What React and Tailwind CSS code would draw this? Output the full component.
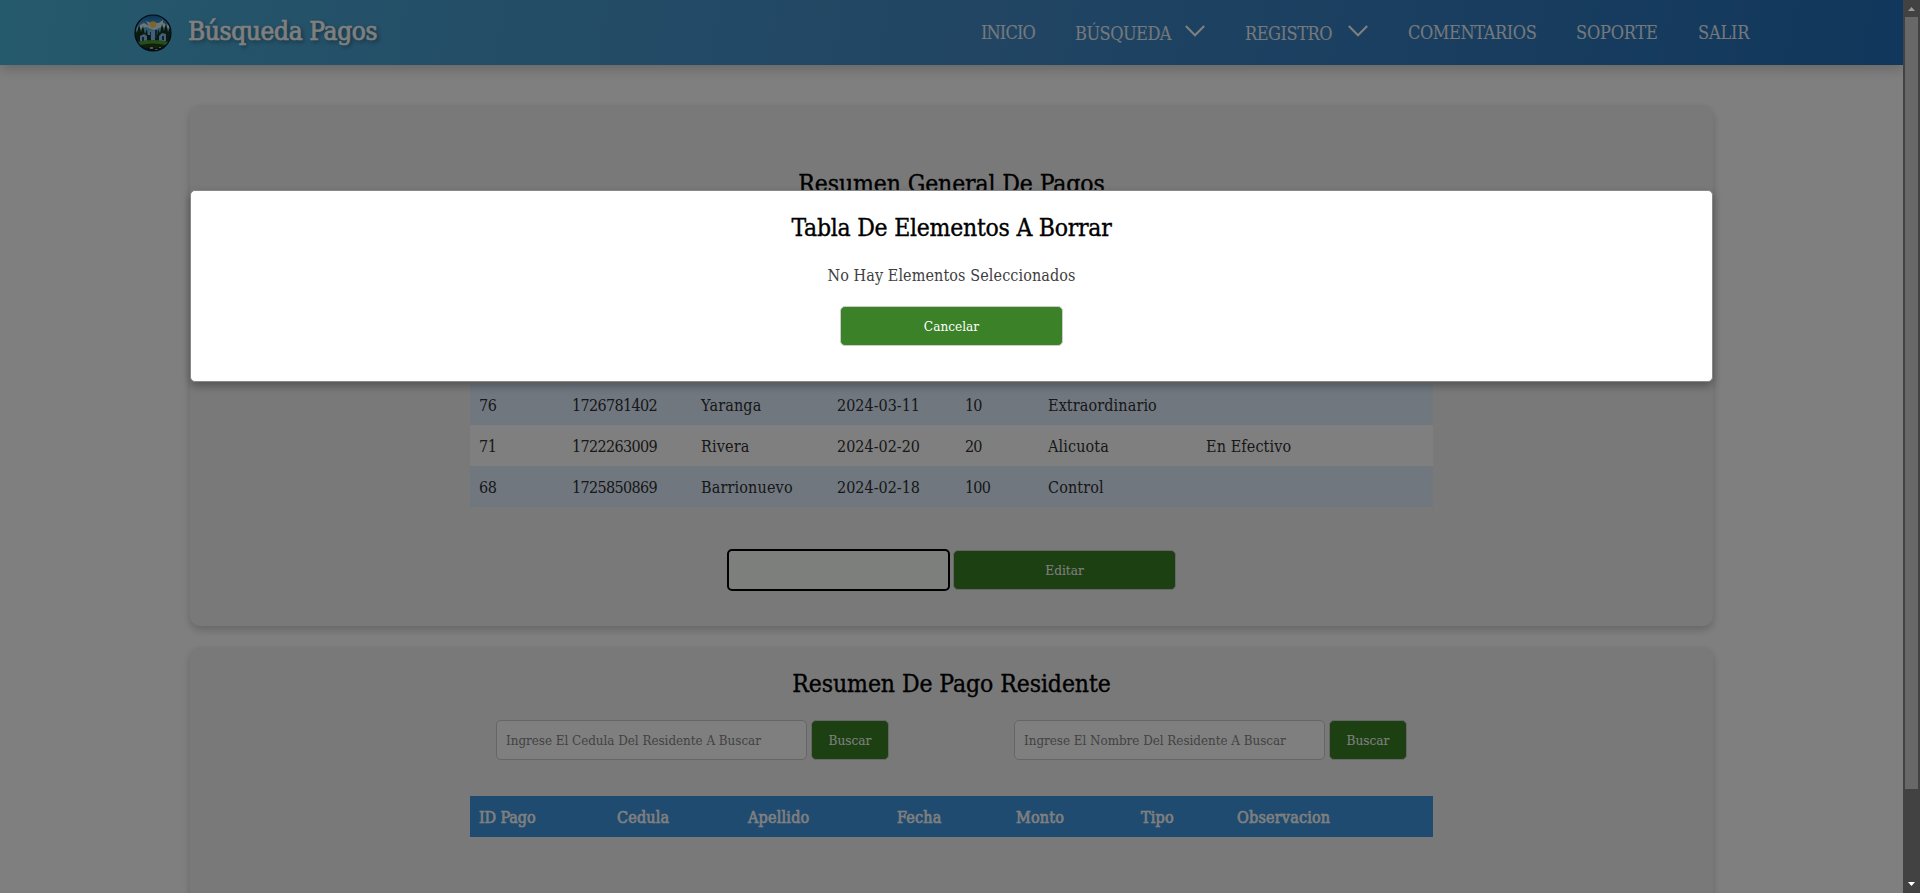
const slab = "font-['DejaVu_Serif_Condensed','DejaVu_Serif',serif] [font-stretch:condensed]";

function Logo() {
  return (
    <svg className="h-[38px] w-[38px] shrink-0" viewBox="0 0 38 38">
      <defs>
        <clipPath id="disc"><circle cx="19" cy="19" r="18" /></clipPath>
        <linearGradient id="sky" x1="0" y1="0" x2="0" y2="1">
          <stop offset="0" stopColor="#0d63a8" />
          <stop offset="1" stopColor="#7fd0f0" />
        </linearGradient>
      </defs>
      <g clipPath="url(#disc)">
        <rect width="38" height="38" fill="#0a2140" />
        <rect width="38" height="21" fill="url(#sky)" />
        <path d="M4 12l6-3 5 3-3-5 5 2 8 0 4-3 0 3 8 3v3l-9-2-8 3-8-3-9 3z" fill="#d8eef2" />
        <circle cx="19" cy="10.5" r="3.2" fill="#ffc94f" />
        <path d="M0 27l1-13 2 5 2-9 2 8 2-6 2 8 2-5 1 8h9l1-8 2 4 2-9 2 7 2-8 2 9 2-5 2 14z" fill="#12351d" />
        <path d="M17 17h4v9h-4zM6 22l4-2 3 2v5H6zM25 22l3-3 4 1v7h-7z" fill="#8fbfe8" />
        <path d="M16 18h1v7h-1zM21 16h2v8h-2zM8 23h2v4H8zM28 22h2v4h-2z" fill="#174878" />
        <path d="M2 28q17-4 34 0l-5 4H7z" fill="#4f9a35" />
        <path d="M6 31q13-3 26 0l-5 3H11z" fill="#1c3f1d" />
        <path d="M16 33h3v2h-3zM21 35h3v1h-3zM25 33h2v1h-2z" fill="#a7bd43" />
      </g>
      <circle cx="19" cy="19" r="18" fill="none" stroke="#06162e" strokeWidth="1.2" />
    </svg>
  );
}

function Chevron() {
  return (
    <svg className="mr-10 mb-[5px] ml-auto h-3 w-5" viewBox="0 0 20 12" fill="none" stroke="#fff" strokeWidth="2">
      <path d="M0.8 1L10 10.3L19.2 1" />
    </svg>
  );
}

const nav = [
  ["INICIO", "w-[94px] tracking-[-0.85px]"],
  ["BÚSQUEDA", "w-[170px] tracking-[-0.5px]", true],
  ["REGISTRO", "w-[163px] tracking-[-0.45px]", true],
  ["COMENTARIOS", "w-[168px] tracking-[-0.4px]"],
  ["SOPORTE", "w-[122px] tracking-[-0.2px]"],
  ["SALIR", "w-[60px] tracking-[-0.2px]"],
];

function Header() {
  return (
    <header className="flex h-[65px] shrink-0 items-center bg-[linear-gradient(100deg,#4bb4d8_0%,#489cd0_25%,#428ac6_52%,#226eb8_100%)] pl-[134px] shadow-[0_4px_12px_rgba(0,0,0,0.2)]">
      <Logo />
      <h1 className="mb-[3px] ml-4 w-[793px] shrink-0 text-[26px] tracking-[-0.35px] whitespace-nowrap text-white [-webkit-text-stroke:0.7px_white] [text-shadow:2px_2px_4px_rgba(0,0,0,0.5)]">
        Búsqueda Pagos
      </h1>
      <nav className="flex items-center text-[18px] text-white/90">
        {nav.map(([label, cls, menu]) => (
          <a key={label} className={`flex h-8 shrink-0 items-center whitespace-nowrap ${cls} ${menu ? "pt-px" : ""}`}>
            {label}
            {menu && <Chevron />}
          </a>
        ))}
      </nav>
    </header>
  );
}

const green = "flex h-[40px] items-center justify-center rounded-[5px] border border-[#ccc] bg-[#3a8127] pt-px text-[13.5px] text-white";

const rows = [
  ["76", "1726781402", "Yaranga", "2024-03-11", "10", "Extraordinario", ""],
  ["71", "1722263009", "Rivera", "2024-02-20", "20", "Alicuota", "En Efectivo"],
  ["68", "1725850869", "Barrionuevo", "2024-02-18", "100", "Control", ""],
];

const cellTracking = [
  "tracking-[-0.5px]",
  "tracking-[-0.65px]",
  "tracking-[0.15px]",
  "tracking-[0px]",
  "tracking-[-0.8px]",
  "tracking-[0.12px]",
  "tracking-[0.12px]",
];

function Search({ placeholder }) {
  return (
    <div className="flex gap-1">
      <div className="flex h-[40px] w-[311px] items-center rounded-[5px] border border-[#ccc] bg-white pt-px pl-[9px] text-[13.3px] tracking-[-0.02px] whitespace-nowrap text-[#858585]">
        {placeholder}
      </div>
      <button className={`${green} w-[78px]`}>Buscar</button>
    </div>
  );
}

const card = "rounded-[10px] bg-[#f2f2f2] shadow-[0_4px_8px_rgba(0,0,0,0.2)]";
const title = "text-center text-[24.5px] leading-8 whitespace-nowrap text-black [-webkit-text-stroke:0.35px_black]";

export default function App() {
  return (
    <div className={`flex h-[893px] w-[1920px] overflow-hidden ${slab}`}>
      <div className="relative h-full w-[1903px] overflow-hidden bg-white">
        <Header />
        <main className="flex flex-col gap-[21px] px-[190px] pt-10">
          <section className={`${card} flex h-[521px] flex-col pt-[63px]`}>
            <h2 className={`${title} tracking-[-0.12px]`}>Resumen General De Pagos</h2>
            <div className="mt-[184px] ml-[280px] w-[963px]">
              {rows.map((r, i) => (
                <div
                  key={r[0]}
                  className={`grid h-[41px] grid-cols-[93px_129px_136px_128px_83px_158px_1fr] items-center pt-[2px] pl-[9px] text-[16px] whitespace-nowrap text-[#303030] ${i % 2 ? "bg-white" : "bg-[#e0efff]"}`}
                >
                  {r.map((c, j) => <span key={j} className={cellTracking[j]}>{c}</span>)}
                </div>
              ))}
            </div>
            <div className="mt-[42px] flex items-center justify-center gap-[3px]">
              <div className="h-[42px] w-[223px] rounded-[5px] border-2 border-black bg-[#fbfff8]" />
              <button className={`${green} w-[223px]`}>Editar</button>
            </div>
          </section>
          <section className={`${card} h-[600px] pt-[21px]`}>
            <h2 className={`${title} tracking-[-0.08px]`}>Resumen De Pago Residente</h2>
            <div className="mt-5 ml-[306px] flex gap-[125px]">
              <Search placeholder="Ingrese El Cedula Del Residente A Buscar" />
              <Search placeholder="Ingrese El Nombre Del Residente A Buscar" />
            </div>
            <div className="mt-9 ml-[280px] grid h-[41px] w-[963px] grid-cols-[138px_131px_149px_119px_125px_96px_1fr] items-center bg-[#3e96e0] pt-[2px] pl-[9px] text-[16px] tracking-[0.2px] whitespace-nowrap text-white [-webkit-text-stroke:0.6px_white]">
              {["ID Pago", "Cedula", "Apellido", "Fecha", "Monto", "Tipo", "Observacion"].map((h) => (
                <span key={h} className="first:tracking-[-0.1px]">{h}</span>
              ))}
            </div>
          </section>
        </main>
        <div className="absolute inset-0 bg-black/50 px-[190px] pt-[190px]">
          <div role="dialog" className="flex h-[192px] flex-col items-center rounded-[5px] border border-[#888] bg-white shadow-[0_4px_8px_rgba(0,0,0,0.3)]">
            <h2 className={`${title} mt-[21px] tracking-[-0.25px]`}>Tabla De Elementos A Borrar</h2>
            <p className="mt-5 text-[16px] leading-6 tracking-[0.1px] text-[#404040]">No Hay Elementos Seleccionados</p>
            <button className={`${green} mt-[18px] w-[223px]`}>Cancelar</button>
          </div>
        </div>
      </div>
      <div className="flex w-[17px] flex-col items-center bg-[#424242]">
        <svg className="h-[17px] w-[17px] shrink-0" viewBox="0 0 17 17"><path d="M5 11l3.5-4 3.5 4z" fill="#9a9a9a" /></svg>
        <div className="h-[772px] w-[13px] bg-[#686868]" />
        <svg className="mt-auto h-[17px] w-[17px] shrink-0" viewBox="0 0 17 17"><path d="M5 6l3.5 4L12 6z" fill="#fff" /></svg>
      </div>
    </div>
  );
}
